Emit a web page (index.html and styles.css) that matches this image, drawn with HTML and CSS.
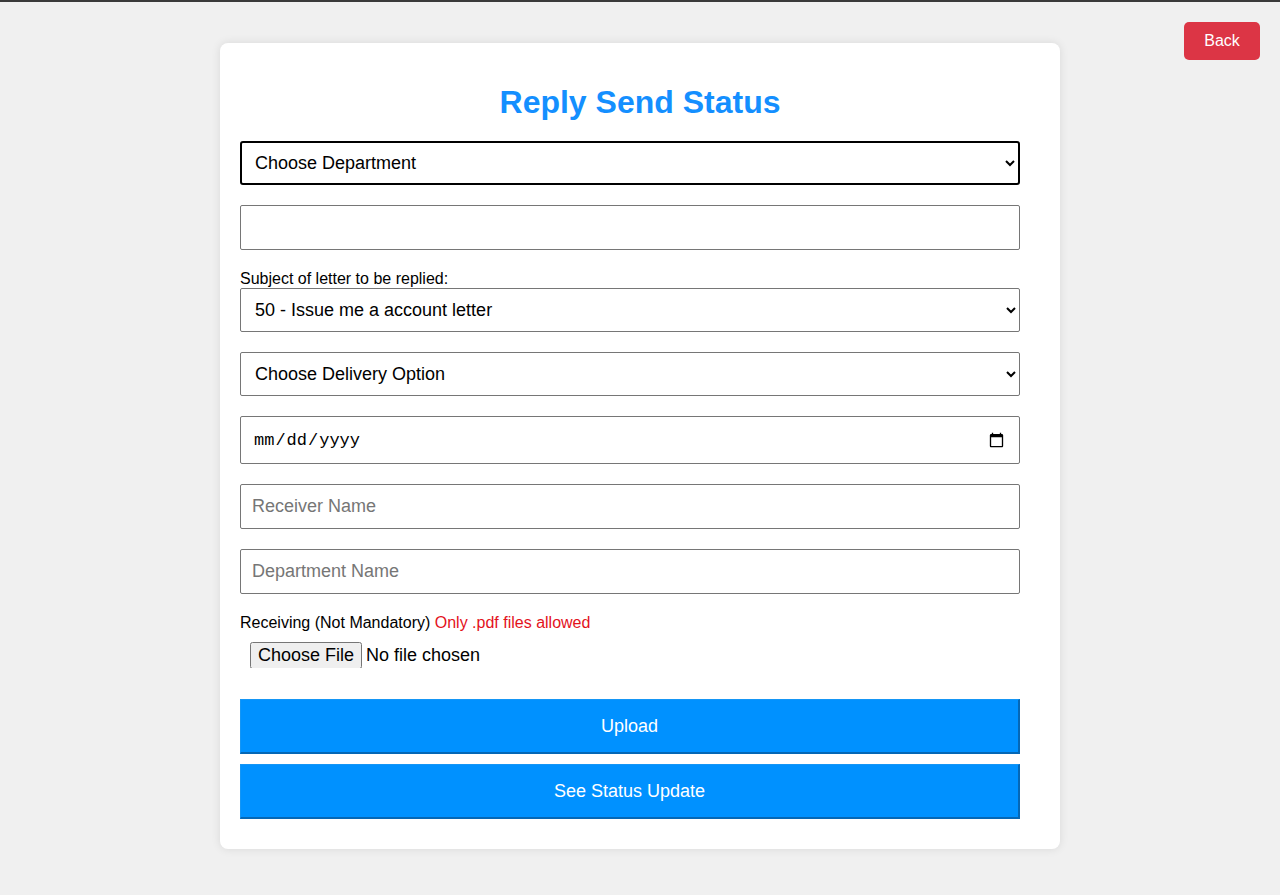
FILE: index.html
```html
<!DOCTYPE html>
<html lang="en">
<head>
<meta charset="utf-8">
<title>Reply Send Status</title>
<link rel="stylesheet" href="styles.css">
</head>
<body>
<button class="back-btn" type="button">Back</button>
<main class="card">
  <h2 class="title">Reply Send Status</h2>
  <form class="form">
    <select class="field select focused">
      <option>Choose Department</option>
    </select>
    <input class="field text" type="text">
    <label class="label">Subject of letter to be replied:</label>
    <select class="field select tight">
      <option>50 - Issue me a account letter</option>
    </select>
    <select class="field select">
      <option>Choose Delivery Option</option>
    </select>
    <input class="field date" type="date">
    <input class="field text" type="text" placeholder="Receiver Name">
    <input class="field text" type="text" placeholder="Department Name">
    <label class="label receiving">Receiving (Not Mandatory) <span class="warn">Only .pdf files allowed</span></label>
    <input class="file" type="file">
    <button class="primary upload" type="button">Upload</button>
    <button class="primary" type="button">See Status Update</button>
  </form>
</main>
</body>
</html>
```
FILE: styles.css
```css
html, body {
  margin: 0;
  padding: 0;
}
body {
  background: #f0f0f0;
  border-top: 2px solid #3a3a3a;
  font-family: "Liberation Sans", Arial, sans-serif;
  min-height: 893px;
  position: relative;
}
.back-btn {
  position: absolute;
  top: 20px;
  right: 20px;
  width: 76px;
  height: 38px;
  background: #dc3545;
  color: #fff;
  border: none;
  border-radius: 5px;
  font-family: "Liberation Sans", Arial, sans-serif;
  font-size: 16px;
  padding: 0;
}
.card {
  width: 800px;
  margin: 41px auto 0;
  background: #fff;
  border-radius: 8px;
  box-shadow: 0 0 10px rgba(0, 0, 0, 0.1);
  padding: 20px 20px 30px;
}
.title {
  margin: 21px 0 20px;
  text-align: center;
  color: #148fff;
  font-size: 32px;
  font-weight: bold;
  line-height: 37px;
}
.form {
  display: flex;
  flex-direction: column;
  width: 780px;
}
.field {
  box-sizing: border-box;
  width: 780px;
  margin: 0 0 20px;
  font-family: "Liberation Sans", Arial, sans-serif;
  font-size: 18px;
  color: #000;
  background: #fff;
  border: 1px solid #767676;
  border-radius: 2px;
}
.select {
  height: 44px;
  padding: 0 10px;
}
.focused {
  border: 2px solid #000;
  border-radius: 3px;
  padding: 0 9px;
}
.text {
  height: 45px;
  padding: 0 11px;
}
.text::placeholder {
  color: #767676;
}
.date {
  height: 48px;
  padding: 0 12px;
  font-family: "Liberation Mono", "Courier New", monospace;
  font-size: 17px;
}
.label {
  font-size: 16px;
  line-height: 18px;
  color: #000;
}
.receiving {
  margin-bottom: 10px;
}
.warn {
  color: #e3121c;
}
.file {
  margin: 0 0 31px 10px;
  font-family: "Liberation Sans", Arial, sans-serif;
  font-size: 18px;
  height: 26px;
}
.primary {
  box-sizing: border-box;
  width: 780px;
  height: 55px;
  background: #0091ff;
  color: #fff;
  font-family: "Liberation Sans", Arial, sans-serif;
  font-size: 18px;
  border-style: solid;
  border-width: 1px 2px 2px 1px;
  border-color: #1596f5 #0567b5 #0567b5 #1596f5;
  padding: 0;
}
.upload {
  margin-bottom: 10px;
}
```
